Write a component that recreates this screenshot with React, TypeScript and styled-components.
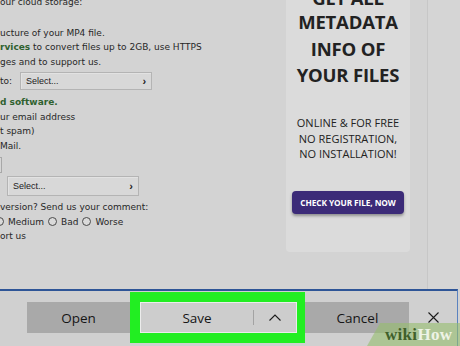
import styled, { createGlobalStyle } from 'styled-components'

const GlobalStyle = createGlobalStyle`
    *{
        margin: 0;
        padding: 0;
        box-sizing: border-box;
    }
    html, body{
        width: 460px;
        height: 346px;
        overflow: hidden;
        background: #d3d3d3;
    }
`

const Page = styled.div`
    position: relative;
    width: 460px;
    height: 346px;
    display: flex;
    flex-direction: column;
    overflow: hidden;
`

const Main = styled.div`
    height: 289px;
    display: flex;
`

const LeftPane = styled.div`
    width: 286px;
    overflow: hidden;
    white-space: nowrap;
    font-family: "DejaVu Sans", Verdana, sans-serif;
    font-size: 9px;
    line-height: 14.5px;
    color: #272727;
`

const Line = styled.div<{ $top?: number }>`
    margin-top: ${p => p.$top ?? 0}px;
`

const Green = styled.span`
    color: #2f612f;
    font-weight: bold;
`

const FieldRow = styled.div<{ $top: number; $indent?: number }>`
    display: flex;
    align-items: center;
    gap: 8px;
    margin-top: ${p => p.$top}px;
    margin-left: ${p => p.$indent ?? 0}px;
`

const SelectBox = styled.div<{ $h: number }>`
    width: 132px;
    height: ${p => p.$h}px;
    display: flex;
    align-items: center;
    justify-content: space-between;
    padding: 0 5px 0 5px;
    background: #d8d8d8;
    border: 1px solid #b4b4b4;
    box-shadow: inset 1px 1px 0 #e2e2e2;
    font-family: "Liberation Sans", Arial, sans-serif;
    font-size: 9px;
    color: #222;
`

const Chevron = styled.span`
    font-size: 11px;
    font-weight: bold;
    line-height: 1;
`

const InputEdge = styled.div`
    width: 50px;
    height: 16px;
    margin-left: -48px;
    margin-top: 4px;
    border: 1px solid #a8a8a8;
    background: #d6d6d6;
`

const RadioRow = styled.div`
    display: flex;
    align-items: center;
    gap: 4px;
    margin-left: -5px;
`

const Radio = styled.span`
    width: 9px;
    height: 9px;
    border-radius: 50%;
    border: 1px solid #4a4a4a;
    background: #dadada;
`

const Panel = styled.div`
    width: 124px;
    align-self: flex-start;
    background: #dbdbdb;
    border-radius: 0 0 4px 4px;
    padding-bottom: 38px;
    display: flex;
    flex-direction: column;
    align-items: center;
    text-align: center;
    color: #222;
    font-family: "Open Sans", sans-serif;
`

const Heading = styled.div<{ $lh: number; $top?: number }>`
    font-size: 18.5px;
    font-weight: 700;
    letter-spacing: -0.2px;
    line-height: ${p => p.$lh}px;
    margin-top: ${p => p.$top ?? 0}px;
    white-space: nowrap;
`

const Sub = styled.div`
    margin-top: 26px;
    font-size: 11px;
    line-height: 15.5px;
    white-space: nowrap;
`

const CheckButton = styled.div`
    margin-top: 29px;
    width: 112px;
    height: 23px;
    display: flex;
    align-items: center;
    justify-content: center;
    background: #3c2b78;
    color: #fff;
    border-radius: 4px;
    box-shadow: 0 2px 3px rgba(0, 0, 0, 0.35);
    font-size: 8.3px;
    font-weight: 700;
    letter-spacing: -0.1px;
`

const Gap = styled.div`
    width: 17px;
`

const RightStrip = styled.div`
    flex: 1;
    border-left: 1px solid #c7c7c7;
    background: #d5d5d5;
`

const Bar = styled.div`
    width: 458px;
    height: 57px;
    border-top: 2px solid #2e5597;
    border-right: 1px solid #5b83c0;
    background: #d0d0d0;
    display: flex;
    align-items: center;
    padding: 1px 0 3px 27px;
    font-family: "Open Sans", sans-serif;
    font-size: 13.5px;
    color: #151515;
`

const DarkButton = styled.div<{ $w: number }>`
    width: ${p => p.$w}px;
    height: 31px;
    background: #a9a9a9;
    display: flex;
    align-items: center;
    justify-content: center;
`

const Highlight = styled.div`
    width: 177px;
    height: 51px;
    background: #22ee22;
    padding: 10px 8px 10px 10px;
`

const SplitButton = styled.div`
    height: 31px;
    display: flex;
    align-items: center;
    background: #cdcdcd;
    border: 1px solid #ececec;
`

const SaveLabel = styled.div`
    width: 112px;
    text-align: center;
`

const Divider = styled.div`
    width: 1px;
    height: 15px;
    background: #a3a3a3;
`

const Caret = styled.div`
    flex: 1;
    display: flex;
    justify-content: center;
`

const Close = styled.div`
    width: 48px;
    display: flex;
    justify-content: center;
`

const Watermark = styled.div`
    position: absolute;
    right: 0;
    bottom: 0;
    width: 93px;
    height: 23px;
    padding-left: 18px;
    background: rgba(150, 190, 110, 0.6);
    clip-path: polygon(13px 0, 100% 0, 100% 100%, 0 100%);
    font-family: "Liberation Serif", serif;
    font-weight: bold;
    font-size: 17px;
    line-height: 24px;
    letter-spacing: 0.3px;
    color: #eef3e6;
    span{
        color: #40602b;
    }
`

export default function App() {
    return (
        <>
            <GlobalStyle />
            <Page>
                <Main>
                    <LeftPane>
                        <Line $top={-5}>our cloud storage:</Line>
                        <Line $top={16}>ucture of your MP4 file.</Line>
                        <Line><Green>rvices</Green> to convert files up to 2GB, use HTTPS</Line>
                        <Line>ges and to support us.</Line>
                        <FieldRow $top={3}>
                            <span>to:</span>
                            <SelectBox $h={18}>Select... <Chevron>›</Chevron></SelectBox>
                        </FieldRow>
                        <Line $top={5}><Green>d software.</Green></Line>
                        <Line>ur email address</Line>
                        <Line>t spam)</Line>
                        <Line>Mail.</Line>
                        <InputEdge />
                        <FieldRow $top={3} $indent={7}>
                            <SelectBox $h={20}>Select... <Chevron>›</Chevron></SelectBox>
                        </FieldRow>
                        <Line $top={4}>version? Send us your comment:</Line>
                        <RadioRow>
                            <Radio /><span>Medium</span>
                            <Radio /><span>Bad</span>
                            <Radio /><span>Worse</span>
                        </RadioRow>
                        <Line>ort us</Line>
                    </LeftPane>
                    <Panel>
                        <Heading $lh={23} $top={-14}>GET ALL</Heading>
                        <Heading $lh={26.7}>METADATA<br />INFO OF<br />YOUR FILES</Heading>
                        <Sub>ONLINE &amp; FOR FREE<br />NO REGISTRATION,<br />NO INSTALLATION!</Sub>
                        <CheckButton>CHECK YOUR FILE, NOW</CheckButton>
                    </Panel>
                    <Gap />
                    <RightStrip />
                </Main>
                <Bar>
                    <DarkButton $w={104}>Open</DarkButton>
                    <Highlight>
                        <SplitButton>
                            <SaveLabel>Save</SaveLabel>
                            <Divider />
                            <Caret>
                                <svg width="12" height="7" viewBox="0 0 12 7">
                                    <polyline points="0.5,6.5 6,1 11.5,6.5" fill="none" stroke="#1a1a1a" strokeWidth="1.1" />
                                </svg>
                            </Caret>
                        </SplitButton>
                    </Highlight>
                    <DarkButton $w={105}>Cancel</DarkButton>
                    <Close>
                        <svg width="11" height="11" viewBox="0 0 11 11">
                            <path d="M0.5 0.5 L10.5 10.5 M10.5 0.5 L0.5 10.5" stroke="#1a1a1a" strokeWidth="1.1" />
                        </svg>
                    </Close>
                </Bar>
                <Watermark><span>wiki</span>How</Watermark>
            </Page>
        </>
    )
}
